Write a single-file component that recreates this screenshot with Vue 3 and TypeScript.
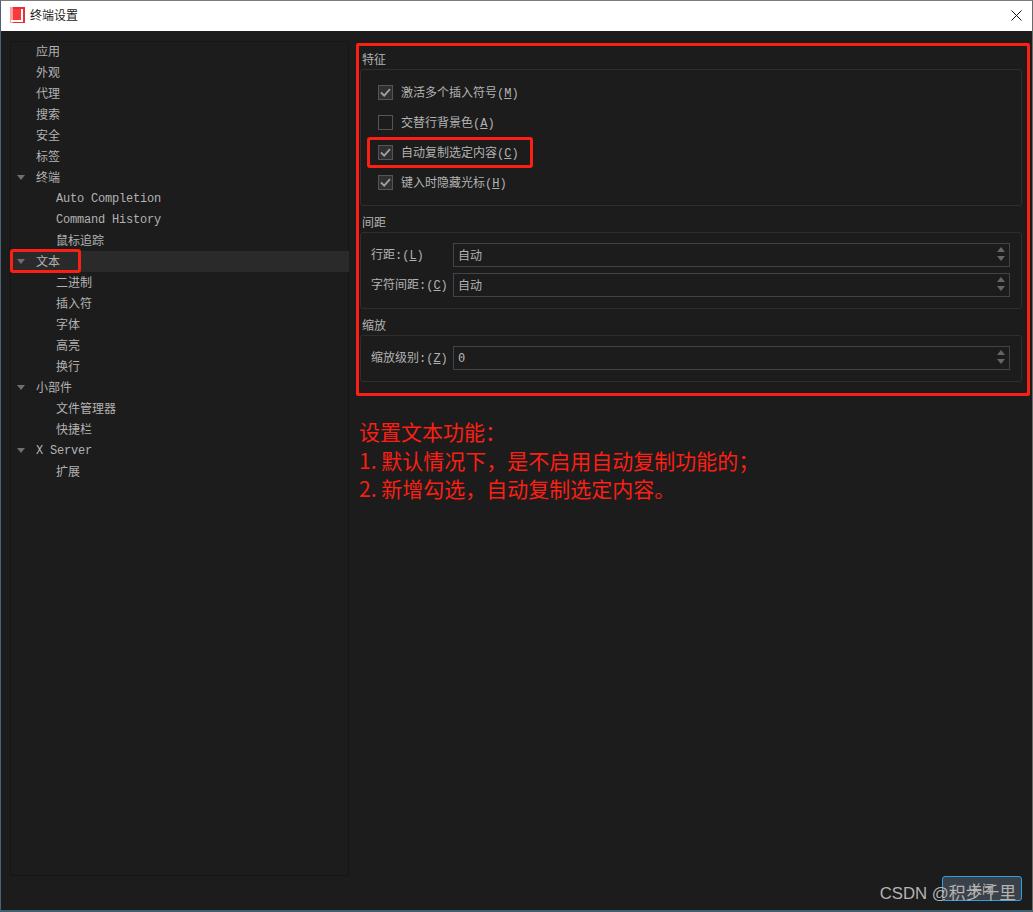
<script setup lang="ts">
interface TreeItem { label: string; level: number; arrow?: boolean; selected?: boolean }
const tree: TreeItem[] = [
  { label: '应用', level: 1 }, { label: '外观', level: 1 }, { label: '代理', level: 1 },
  { label: '搜索', level: 1 }, { label: '安全', level: 1 }, { label: '标签', level: 1 },
  { label: '终端', level: 1, arrow: true },
  { label: 'Auto Completion', level: 2 }, { label: 'Command History', level: 2 }, { label: '鼠标追踪', level: 2 },
  { label: '文本', level: 1, arrow: true, selected: true },
  { label: '二进制', level: 2 }, { label: '插入符', level: 2 }, { label: '字体', level: 2 },
  { label: '高亮', level: 2 }, { label: '换行', level: 2 },
  { label: '小部件', level: 1, arrow: true },
  { label: '文件管理器', level: 2 }, { label: '快捷栏', level: 2 },
  { label: 'X Server', level: 1, arrow: true },
  { label: '扩展', level: 2 },
]
const isLatin = (s: string): boolean => /^[A-Za-z ]+$/.test(s)
const checks = [
  { pre: '激活多个插入符号(', key: 'M', on: true },
  { pre: '交替行背景色(', key: 'A', on: false },
  { pre: '自动复制选定内容(', key: 'C', on: true },
  { pre: '键入时隐藏光标(', key: 'H', on: true },
]
const noteLines = [
  '设置文本功能\uFF1A',
  '1. 默认情况下\uFF0C是不启用自动复制功能的\uFF1B',
  '2. 新增勾选\uFF0C自动复制选定内容。',
]
</script>

<template>
  <div class="win">
    <header class="titlebar">
      <svg class="logo" width="16" height="16" viewBox="0 0 16 16">
        <rect x="0" y="0" width="15" height="16" fill="#e5303a" />
        <rect x="0" y="0" width="3" height="16" fill="#f8a0a0" />
        <rect x="3" y="2" width="8" height="11" fill="#fb3a3c" />
        <path d="M11 2h2v13H1v-2h10z" fill="#fff" />
      </svg>
      <span class="title">终端设置</span>
      <svg class="close" width="11" height="11" viewBox="0 0 11 11">
        <path d="M.5.500l10 10M10.500.500l-10 10" stroke="#111" stroke-width="1" fill="none" />
      </svg>
    </header>
    <main class="body">
      <nav class="tree">
        <div
          v-for="t in tree"
          :key="t.label"
          class="row"
          :class="{ sel: t.selected, l2: t.level === 2, latin: isLatin(t.label) }"
        >
          <span v-if="t.arrow" class="arrow"></span>
          <span>{{ t.label }}</span>
        </div>
        <div class="mark-tree"></div>
      </nav>
      <section class="right">
        <div class="panel">
          <div class="gtitle">特征</div>
          <div class="group features">
            <label v-for="c in checks" :key="c.key" class="check">
              <span class="box" :class="{ on: c.on }">
                <svg v-if="c.on" width="13" height="13" viewBox="0 0 13 13">
                  <path d="M2 6.500l3.200 3.200 5.800-6.600" stroke="#a0a0a0" stroke-width="1.800" fill="none" />
                </svg>
              </span>
              <span>{{ c.pre }}<u>{{ c.key }}</u>)</span>
            </label>
            <div class="mark-check"></div>
          </div>
          <div class="gtitle">间距</div>
          <div class="group spacing">
            <div class="field">
              <span class="flabel">行距:(<u>L</u>)</span>
              <div class="spin">自动<span class="arrows"><i class="up"></i><i class="down"></i></span></div>
            </div>
            <div class="field">
              <span class="flabel">字符间距:(<u>C</u>)</span>
              <div class="spin">自动<span class="arrows"><i class="up"></i><i class="down"></i></span></div>
            </div>
          </div>
          <div class="gtitle">缩放</div>
          <div class="group zoom">
            <div class="field">
              <span class="flabel">缩放级别:(<u>Z</u>)</span>
              <div class="spin num">0<span class="arrows"><i class="up"></i><i class="down"></i></span></div>
            </div>
          </div>
        </div>
        <div class="note">
          <p v-for="line in noteLines" :key="line">{{ line }}</p>
        </div>
        <div class="foot">
          <button class="apply">关闭</button>
          <span class="wm">CSDN @积步千里</span>
        </div>
      </section>
    </main>
  </div>
</template>

<style>
html, body { margin: 0; background: #1c1c1c; }
</style>

<style scoped>
.win {
  width: 1033px; height: 912px; box-sizing: border-box; overflow: hidden;
  display: flex; flex-direction: column; background: #1c1c1c;
  border-top: 1px solid #7c7c7c; border-left: 1px solid #4a6272; border-right: 1px solid #6a6a6a;
  border-bottom: 2px solid #3f6070;
  font-family: "Liberation Mono", "Noto Sans CJK SC", monospace;
  font-size: 12px; color: #b2b2b2;
}
.titlebar {
  height: 30px; flex: none; background: #fff; display: flex; align-items: center; box-sizing: border-box;
  padding: 0 10px 2px 9px; color: #222;
}
.logo { flex: none; }
.title { margin: 0 0 2px 4px; font-family: "Noto Sans CJK SC", sans-serif; font-size: 12px; }
.close { margin-left: auto; }
.body { flex: 1; display: flex; min-height: 0; padding: 10px 2px 0 9px; }
.tree {
  position: relative; width: 339px; height: 835px; flex: none; box-sizing: border-box;
  outline: 1px solid #161616; outline-offset: -1px;
}
.row { position: relative; height: 21px; line-height: 24px; padding-left: 26px; white-space: pre; }
.row.l2 { padding-left: 46px; }
.row.latin { line-height: 22px; letter-spacing: -0.2px; }
.row.sel { background: #2a2a2a; }
.arrow {
  position: absolute; left: 7px; top: 8px; width: 0; height: 0;
  border-left: 4px solid transparent; border-right: 4px solid transparent; border-top: 5px solid #6f6f6f;
}
.mark-tree {
  position: absolute; left: 0; top: 208px; width: 71px; height: 24px; box-sizing: border-box;
  border: 3px solid #fb1f14; border-radius: 3px;
}
.right { flex: 1; min-width: 0; padding-left: 7px; display: flex; flex-direction: column; }
.panel {
  height: 353px; flex: none; box-sizing: border-box; border: 3px solid #fb1f14; border-radius: 2px;
  padding: 6px 5px 0 1px; margin-top: 2px;
}
.gtitle { height: 17px; line-height: 18px; padding-left: 2px; }
.group { position: relative; border: 1px solid #2e2e2e; border-radius: 3px; box-sizing: border-box; }
.features { height: 137px; padding: 7px 0 0 17px; margin-bottom: 9px; }
.check { display: flex; align-items: center; height: 30px; gap: 8px; }
.box {
  width: 15px; height: 15px; box-sizing: border-box; border: 1px solid #555; display: block; flex: none;
}
.box.on { background: #303030; }
.box svg { display: block; }
.mark-check {
  position: absolute; left: 6px; top: 67px; width: 166px; height: 31px; box-sizing: border-box;
  border: 3px solid #fb1f14; border-radius: 3px;
}
.spacing { height: 77px; padding: 10px 11px 0 10px; margin-bottom: 9px; display: flex; flex-direction: column; gap: 6px; }
.zoom { height: 47px; padding: 10px 11px 0 10px; }
.field { display: flex; align-items: center; height: 24px; }
.flabel { width: 82px; flex: none; white-space: pre; padding-bottom: 2px; }
.spin {
  position: relative; flex: 1; height: 24px; box-sizing: border-box; border: 1px solid #444;
  line-height: 26px; padding-left: 4px;
}
.spin.num { font-family: "DejaVu Sans Mono", monospace; line-height: 22px; }
.arrows { position: absolute; right: 4px; top: 3px; display: flex; flex-direction: column; gap: 4px; }
.up, .down { display: block; width: 0; height: 0; border-left: 4px solid transparent; border-right: 4px solid transparent; }
.up { border-bottom: 5px solid #666; }
.down { border-top: 5px solid #666; }
.note { margin-top: 21px; padding-left: 3px; color: #fb1f14; font-family: "Noto Sans CJK SC", sans-serif; font-size: 21px; line-height: 28.500px; }
.note p { margin: 0; white-space: pre; }
.foot { position: relative; flex: 1; }
.apply {
  position: absolute; right: 8px; bottom: 9px; width: 80px; height: 25px; padding: 0;
  background: #3b4148; border: 1px solid #2f9fe8; border-radius: 3px; color: #b5b5b5;
  font: 12px "Noto Sans CJK SC", sans-serif;
}
.wm {
  position: absolute; right: 14px; bottom: 6px; color: #b4b4b4; white-space: pre;
  font-family: "Liberation Sans", "Noto Sans CJK SC", sans-serif; font-size: 16.800px;
}
</style>
